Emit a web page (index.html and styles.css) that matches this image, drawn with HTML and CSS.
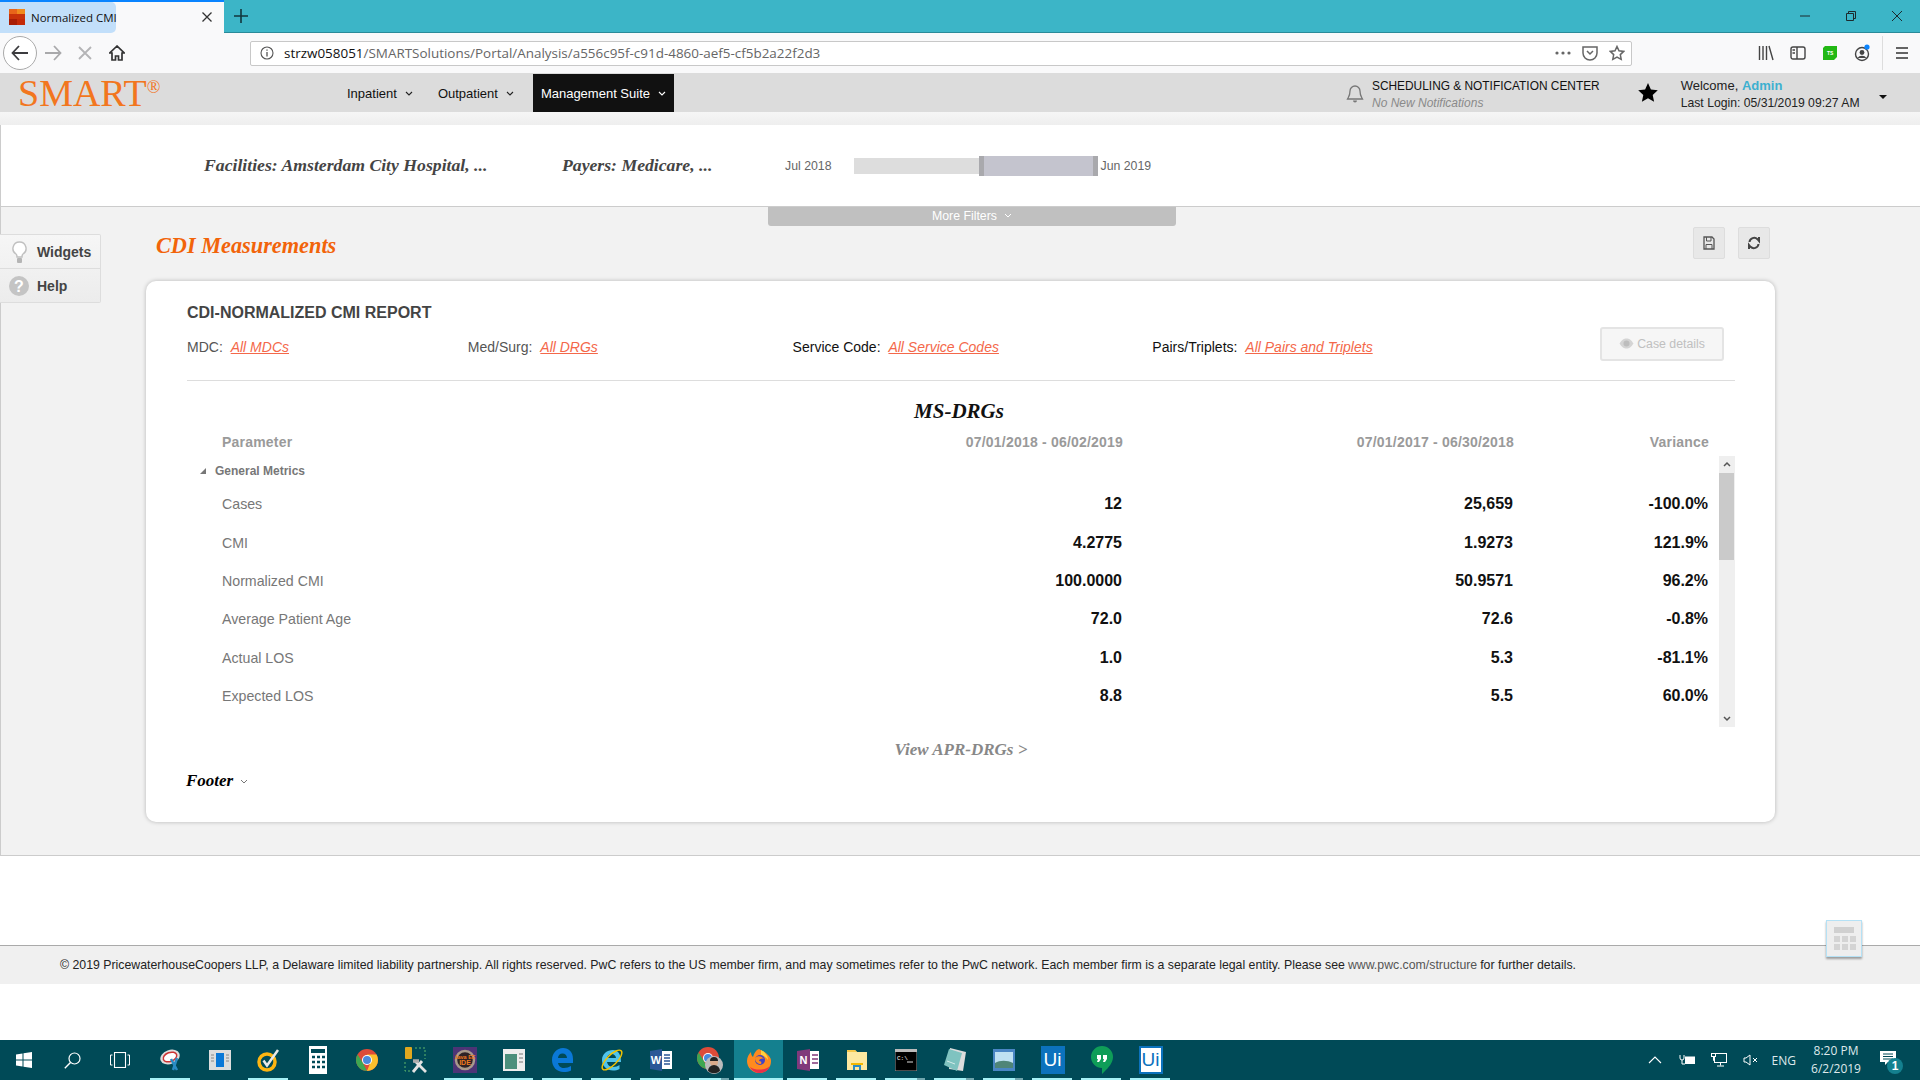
FILE: index.html
```html
<!DOCTYPE html>
<html lang="en">
<head>
    <meta charset="UTF-8">
    <meta name="viewport" content="width=device-width, initial-scale=1.0">
    <title>Normalized CMI</title>
    <link rel="stylesheet" href="styles.css">
</head>
<body>
    <!-- browser chrome -->
    <div class="titlebar">
        <div class="tab">
            <div class="tab-progress"></div>
            <svg class="favicon" width="16" height="16" viewBox="0 0 16 16"><rect width="16" height="16" fill="#c8320a"/><rect x="8" width="8" height="5" fill="#f08a1d"/><rect width="8" height="5" fill="#e8641a"/><rect y="10" width="8" height="6" fill="#a81e06"/><rect x="8" y="10" width="8" height="6" fill="#c42a08"/></svg>
            <span class="tab-title">Normalized CMI</span>
            <svg class="tab-close" width="12" height="12" viewBox="0 0 12 12"><path d="M1.5 1.5l9 9M10.5 1.5l-9 9" stroke="#333" stroke-width="1.3"/></svg>
        </div>
        <svg class="new-tab" width="14" height="14" viewBox="0 0 14 14"><path d="M7 0v14M0 7h14" stroke="#12363d" stroke-width="1.6"/></svg>
        <div class="window-controls">
            <svg width="12" height="12" viewBox="0 0 12 12"><path d="M1 6h10" stroke="#1c2b2e"/></svg>
            <svg width="12" height="12" viewBox="0 0 12 12"><path d="M1.5 3.5h7v7h-7zM3.5 3.5v-2h7v7h-2" fill="none" stroke="#1c2b2e"/></svg>
            <svg width="12" height="12" viewBox="0 0 12 12"><path d="M1 1l10 10M11 1l-10 10" stroke="#1c2b2e"/></svg>
        </div>
    </div>

    <div class="toolbar">
        <div class="nav-btn back"><svg width="18" height="16" viewBox="0 0 18 16"><path d="M8 1L1.5 8 8 15M2 8h15" fill="none" stroke="#3c3c3f" stroke-width="1.8"/></svg></div>
        <div class="nav-btn"><svg width="18" height="16" viewBox="0 0 18 16"><path d="M10 1l6.500 7L10 15M16 8H1" fill="none" stroke="#a9a9ab" stroke-width="1.8"/></svg></div>
        <div class="nav-btn"><svg width="14" height="14" viewBox="0 0 14 14"><path d="M1 1l12 12M13 1L1 13" stroke="#b4b4b6" stroke-width="1.8"/></svg></div>
        <div class="nav-btn"><svg width="16" height="16" viewBox="0 0 16 16"><path d="M8 1L.8 8H3v7h3.500v-4h3v4H13V8h2.200z" fill="none" stroke="#333" stroke-width="1.700"/></svg></div>
        <div class="address">
            <svg class="info-icon" width="14" height="14" viewBox="0 0 14 14"><circle cx="7" cy="7" r="6" fill="none" stroke="#555" stroke-width="1.100"/><path d="M7 6v4.500M7 3.500v1.300" stroke="#555" stroke-width="1.300"/></svg>
            <span class="url"><b>strzw058051</b>/SMARTSolutions/Portal/Analysis/a556c95f-c91d-4860-aef5-cf5b2a22f2d3</span>
            <svg width="16" height="4" viewBox="0 0 16 4"><circle cx="2" cy="2" r="1.600" fill="#666"/><circle cx="8" cy="2" r="1.600" fill="#666"/><circle cx="14" cy="2" r="1.600" fill="#666"/></svg>
            <svg width="16" height="16" viewBox="0 0 16 16"><path d="M1 2h14v6a7 7 0 0 1-14 0z" fill="none" stroke="#666" stroke-width="1.500"/><path d="M5 6l3 3 3-3" fill="none" stroke="#666" stroke-width="1.500"/></svg>
            <svg width="16" height="16" viewBox="0 0 16 16"><path d="M8 1.500l2 4.300 4.700.6-3.400 3.200.9 4.700L8 12l-4.200 2.300.9-4.700L1.300 6.400 6 5.800z" fill="none" stroke="#666" stroke-width="1.500"/></svg>
        </div>
        <div class="browser-tools">
            <svg width="16" height="16" viewBox="0 0 16 16"><path d="M1.500 1v14M5 1v14M8.500 1v14M11 1l4 14" stroke="#444" stroke-width="1.400" fill="none"/></svg>
            <svg width="16" height="16" viewBox="0 0 16 16"><rect x="1" y="2" width="14" height="12" rx="2" fill="none" stroke="#444" stroke-width="1.400"/><path d="M7 2v12M2.500 5H5M2.500 8H5" stroke="#444" stroke-width="1.400"/></svg>
            <svg width="16" height="16" viewBox="0 0 16 16"><path d="M3 1h12v11l-3 3H1V3z" fill="#22b814"/><text x="5" y="10" class="ext-label">TS</text></svg>
            <svg width="16" height="18" viewBox="0 0 16 18"><circle cx="8" cy="10" r="6.500" fill="none" stroke="#444" stroke-width="1.400"/><circle cx="8" cy="8.500" r="2.400" fill="#444"/><path d="M3.500 14a5 4 0 0 1 9 0" fill="#444"/><circle cx="13" cy="3" r="2.600" fill="#0a84ff"/></svg>
            <div class="tools-divider"></div>
            <svg width="14" height="14" viewBox="0 0 14 14"><path d="M1 2h12M1 7h12M1 12h12" stroke="#333" stroke-width="1.600"/></svg>
        </div>
    </div>

    <!-- app header -->
    <div class="appnav">
        <div class="logo">SMART<sup>®</sup></div>
        <div class="menu">
            <div class="menu-item">Inpatient <svg class="chev" width="8" height="5" viewBox="0 0 8 5"><path d="M1 1l3 3 3-3" fill="none" stroke="#222" stroke-width="1.100"/></svg></div>
            <div class="menu-item">Outpatient <svg class="chev" width="8" height="5" viewBox="0 0 8 5"><path d="M1 1l3 3 3-3" fill="none" stroke="#222" stroke-width="1.100"/></svg></div>
            <div class="menu-item active">Management Suite <svg class="chev" width="8" height="5" viewBox="0 0 8 5"><path d="M1 1l3 3 3-3" fill="none" stroke="#fff" stroke-width="1.100"/></svg></div>
        </div>
        <div class="notify">
            <svg width="18" height="20" viewBox="0 0 18 20"><path d="M9 2a5 5 0 0 0-5 5c0 5-1.500 6-2.500 8h15c-1-2-2.500-3-2.500-8a5 5 0 0 0-5-5z" fill="none" stroke="#777" stroke-width="1.300"/><path d="M7 16.500a2 2 0 0 0 4 0z" fill="#777"/></svg>
            <div>
                <div class="notify-title">SCHEDULING &amp; NOTIFICATION CENTER</div>
                <div class="notify-sub">No New Notifications</div>
            </div>
        </div>
        <svg class="fav-star" width="20" height="19" viewBox="0 0 20 19"><path d="M10 0l2.900 6.400 6.900.8-5.100 4.700 1.400 6.900L10 15.300l-6.100 3.500 1.400-6.900L.2 7.200l6.900-.8z" fill="#000"/></svg>
        <div class="welcome">
            <div class="welcome-name">Welcome, <b>Admin</b></div>
            <div>Last Login: 05/31/2019 09:27 AM</div>
        </div>
        <div class="caret"></div>
    </div>
    <div class="strip"></div>

    <!-- filters -->
    <div class="filters">
        <span class="filter-text facilities">Facilities: Amsterdam City Hospital, ...</span>
        <span class="filter-text payers">Payers: Medicare, ...</span>
        <span class="date-label from">Jul 2018</span>
        <div class="slider"><div class="slider-range"></div></div>
        <span class="date-label to">Jun 2019</span>
    </div>

    <div class="main">
        <div class="side-tabs">
            <div class="side-tab">
                <svg width="15" height="23" viewBox="0 0 15 23"><path d="M7.500 1a6.500 6.500 0 0 0-3.500 12c.8.600 1 1.500 1 3h5c0-1.500.2-2.400 1-3a6.500 6.500 0 0 0-3.500-12z" fill="#fff" stroke="#c0c0c0" stroke-width="1.400"/><rect x="5" y="17" width="5" height="5" rx="1" fill="#b5b5b5"/></svg>
                Widgets
            </div>
            <div class="side-tab">
                <svg width="20" height="20" viewBox="0 0 20 20"><circle cx="10" cy="10" r="10" fill="#c4c4c4"/><text x="10" y="15.500" class="help-mark">?</text></svg>
                Help
            </div>
        </div>

        <div class="content">
            <div class="more-filters">More Filters <svg width="8" height="5" viewBox="0 0 8 5"><path d="M1 1l3 3 3-3" fill="none" stroke="#fff"/></svg></div>
            <div class="page-head">
                <h1>CDI Measurements</h1>
                <div class="page-actions">
                    <div class="icon-btn"><svg width="12" height="14" viewBox="0 0 12 14"><path d="M1 1h8l2 2v10H1z" fill="none" stroke="#555" stroke-width="1.300"/><path d="M3.500 1v4h4.500V1M3 13V8.500h6V13" fill="none" stroke="#555"/></svg></div>
                    <div class="icon-btn"><svg width="12" height="14" viewBox="0 0 12 14"><path d="M1.500 6a4.700 4.700 0 0 1 8-2.800L11 5V1M10.500 8a4.700 4.700 0 0 1-8 2.800L1 9v4" fill="none" stroke="#444" stroke-width="2"/></svg></div>
                </div>
            </div>

            <div class="card">
                <h2>CDI-NORMALIZED CMI REPORT</h2>
                <div class="report-filters">
                    <div class="report-filter mdc">MDC: <a>All MDCs</a></div>
                    <div class="report-filter surg">Med/Surg: <a>All DRGs</a></div>
                    <div class="report-filter code">Service Code: <a>All Service Codes</a></div>
                    <div class="report-filter pairs">Pairs/Triplets: <a>All Pairs and Triplets</a></div>
                    <div class="case-details">
                        <svg width="15" height="11" viewBox="0 0 15 11"><path d="M.5 5.500C3 1.500 5 .5 7.500.5s4.500 1 7 5c-2.500 4-4.500 5-7 5s-4.500-1-7-5z" fill="#d4d4d4"/><circle cx="7.500" cy="5.500" r="3" fill="#bdbdbd"/></svg>
                        Case details
                    </div>
                </div>

                <h3>MS-DRGs</h3>
                <div class="grid-row grid-head">
                    <div class="param">Parameter</div>
                    <div>07/01/2018 - 06/02/2019</div>
                    <div>07/01/2017 - 06/30/2018</div>
                    <div>Variance</div>
                </div>
                <div class="grid-scroll">
                    <div class="grid-body">
                        <div class="group"><span class="group-arrow"></span>General Metrics</div>
                        <div class="grid-row metric"><div class="param">Cases</div><div>12</div><div>25,659</div><div>-100.0%</div></div>
                        <div class="grid-row metric"><div class="param">CMI</div><div>4.2775</div><div>1.9273</div><div>121.9%</div></div>
                        <div class="grid-row metric"><div class="param">Normalized CMI</div><div>100.0000</div><div>50.9571</div><div>96.2%</div></div>
                        <div class="grid-row metric"><div class="param">Average Patient Age</div><div>72.0</div><div>72.6</div><div>-0.8%</div></div>
                        <div class="grid-row metric"><div class="param">Actual LOS</div><div>1.0</div><div>5.3</div><div>-81.1%</div></div>
                        <div class="grid-row metric"><div class="param">Expected LOS</div><div>8.8</div><div>5.5</div><div>60.0%</div></div>
                    </div>
                    <div class="scrollbar">
                        <svg width="16" height="17" viewBox="0 0 16 17"><path d="M5 10l3-3 3 3" fill="none" stroke="#555" stroke-width="1.500"/></svg>
                        <div class="scroll-thumb"></div>
                        <svg class="scroll-down" width="16" height="17" viewBox="0 0 16 17"><path d="M5 7l3 3 3-3" fill="none" stroke="#555" stroke-width="1.500"/></svg>
                    </div>
                </div>
                <div class="view-apr">View APR-DRGs &gt;</div>
                <div class="card-footer">Footer <svg width="8" height="5" viewBox="0 0 8 5"><path d="M1 1l3 3 3-3" fill="none" stroke="#777"/></svg></div>
            </div>
        </div>
    </div>

    <div class="blank-a"></div>
    <div class="legal">
        © 2019 PricewaterhouseCoopers LLP, a Delaware limited liability partnership. All rights reserved. PwC refers to the US member firm, and may sometimes refer to the PwC network. Each member firm is a separate legal entity. Please see <a>www.pwc.com/structure</a> for further details.
        <div class="float-widget">
            <div class="float-bar"></div>
            <div class="float-cells"><i></i><i></i><i></i><i></i><i></i><i></i></div>
        </div>
    </div>
    <div class="blank-b"></div>

    <!-- windows taskbar -->
    <div class="taskbar">
        <div class="tb-system">
            <div class="tb-sys"><svg width="16" height="16" viewBox="0 0 16 16"><path d="M0 2.500l6.500-1v6H0zM7.500 1.300L16 0v7.500H7.500zM0 8.500h6.500v6l-6.500-1zM7.500 8.500H16V16l-8.500-1.300z" fill="#fff"/></svg></div>
            <div class="tb-sys"><svg width="17" height="17" viewBox="0 0 17 17"><circle cx="10.500" cy="6.500" r="5.500" fill="none" stroke="#fff" stroke-width="1.200"/><path d="M6.500 10.500L.8 16.200" stroke="#fff" stroke-width="1.400"/></svg></div>
            <div class="tb-sys"><svg width="20" height="16" viewBox="0 0 20 16"><rect x="4.500" y=".5" width="11" height="15" fill="none" stroke="#fff" stroke-width="1.100"/><path d="M2.500 3H.5v10h2M17.500 3h2v10h-2" fill="none" stroke="#fff"/></svg></div>
        </div>
        <div class="tb-apps">
            <div class="tb-app on"><svg width="24" height="24" viewBox="0 0 24 24"><ellipse cx="11" cy="9" rx="10" ry="7" transform="rotate(-20 11 9)" fill="#ddd"/><ellipse cx="11" cy="9" rx="7" ry="4.500" transform="rotate(-20 11 9)" fill="#fff" stroke="#c33" stroke-width="1.500"/><path d="M12 11l6 11M18 10l-4 12" stroke="#2a8bc4" stroke-width="2.500"/></svg></div>
            <div class="tb-app"><svg width="22" height="20" viewBox="0 0 22 20"><rect width="22" height="20" fill="#ddd"/><rect x="7" y="3" width="8" height="14" fill="#0a78d7"/><path d="M2 5h3M2 8h3M2 11h3M17 5h3M17 8h3M17 11h3" stroke="#888"/></svg></div>
            <div class="tb-app on"><svg width="24" height="24" viewBox="0 0 24 24"><circle cx="10" cy="14" r="8" fill="none" stroke="#fdb511" stroke-width="3.500"/><path d="M6.500 12.500l3.500 5L21 2" fill="none" stroke="#e8e8e8" stroke-width="2.500"/></svg></div>
            <div class="tb-app"><svg width="18" height="28" viewBox="0 0 18 28"><rect width="18" height="28" fill="#fff"/><rect x="2" y="3" width="14" height="4" fill="#004a57"/><path d="M3 11h3M8 11h3M13 11h3M3 16h3M8 16h3M13 16h3M3 21h3M8 21h3M13 21h3" stroke="#004a57" stroke-width="2.500"/></svg></div>
            <div class="tb-app"><svg width="22" height="22" viewBox="0 0 22 22"><circle cx="11" cy="11" r="11" fill="#dd4b39"/><path d="M11 22a11 11 0 0 1-9.500-16.500L7 14z" fill="#3da751"/><path d="M11 22a11 11 0 0 0 9.500-16.500H11l3 9z" fill="#fbc02d"/><circle cx="11" cy="11" r="5" fill="#fff"/><circle cx="11" cy="11" r="4" fill="#4a89dc"/></svg></div>
            <div class="tb-app"><svg width="24" height="28" viewBox="0 0 24 28"><rect x="1" y="1" width="7" height="12" rx="1" fill="#e0a81e"/><path d="M11 2h10v11M1 16v9h5" fill="none" stroke="#5cb56c" stroke-dasharray="2 2"/><path d="M9 26l9-11M22 26L11 15" stroke="#e2e2e2" stroke-width="2.800"/><path d="M9 15h6" stroke="#aaa" stroke-width="3.500"/></svg></div>
            <div class="tb-app on"><svg width="24" height="26" viewBox="0 0 24 26"><rect width="24" height="26" fill="#4d3476"/><circle cx="12" cy="13" r="9" fill="#2d2226" stroke="#a89a8c" stroke-width="2.500"/><text x="12" y="11.500" class="ide-label">Java EE</text><text x="12" y="18" class="ide-label big">IDE</text></svg></div>
            <div class="tb-app on"><svg width="22" height="22" viewBox="0 0 22 22"><rect width="22" height="22" fill="#eee"/><rect x="2" y="5" width="12" height="15" fill="#4b8f7c"/><path d="M16 5h4M16 9h4M16 13h4" stroke="#777"/></svg></div>
            <div class="tb-app on"><svg width="21" height="24" viewBox="0 0 21 24"><path d="M21 15h-15c.5 3 3 5 6 5 2.500 0 5-1 7-2v4.500c-2 1-4.500 1.500-7.500 1.500C5 24 0 19 0 12 0 5 5 0 11 0c6 0 10 4 10 11z" fill="#0a78d7"/><path d="M6 10h9c0-2.500-2-4.500-4.500-4.500S6 7.500 6 10z" fill="#004a57"/></svg></div>
            <div class="tb-app on"><svg width="24" height="26" viewBox="0 0 24 26"><path d="M21 15H7c.5 3 3 5 6 5 2.500 0 5-1 6.500-2v4c-2 1-4 1.500-6.500 1.500-6 0-11-4.500-11-10.500S7 3 13 3c5 0 8 4 8 12z" fill="#4fc4ec"/><path d="M7 11h9c0-2-2-4-4.500-4S7 9 7 11z" fill="#004a57"/><ellipse cx="12" cy="13" rx="13" ry="5" transform="rotate(-45 12 13)" fill="none" stroke="#f5c400" stroke-width="1.400"/></svg></div>
            <div class="tb-app on"><svg width="24" height="24" viewBox="0 0 24 24"><rect x="8" y="3" width="15" height="18" fill="#fff"/><path d="M15 7h6M15 10h6M15 13h6M15 16h6" stroke="#2b5797" stroke-width="1.400"/><path d="M1 3l12-2v22L1 21z" fill="#2b5797"/><text x="7" y="16" class="tile-letter">W</text></svg></div>
            <div class="tb-app on split"><svg width="26" height="30" viewBox="0 0 26 30"><circle cx="11" cy="13" r="11" fill="#dd4b39"/><path d="M11 24A11 11 0 0 1 1.500 7.500L7 16z" fill="#3da751"/><circle cx="11" cy="13" r="5" fill="#fff"/><circle cx="11" cy="13" r="4" fill="#4a89dc"/><circle cx="17" cy="20" r="9" fill="#bbb"/><circle cx="17" cy="17" r="4" fill="#d9a98a"/><path d="M11 26a6 6 0 0 1 12 0 9 9 0 0 1-12 0z" fill="#222"/><path d="M13 16a4 4 0 0 1 8 0z" fill="#222"/></svg></div>
            <div class="tb-app on active"><svg width="24" height="26" viewBox="0 0 24 26"><path d="M12 2C20 6 24 10 24 14c0 7-5 12-12 12C5 26 0 20 0 14c0-4 2-7 4-9 0 3 1 4 2 5 1-4 3-7 6-8z" fill="#ff8a1e"/><path d="M3 20c2 4 6 6 10 6 4 0 8-2 10-7-4 4-14 5-20 1z" fill="#e8304a"/><path d="M14 3c4 2 7 6 7 10-2-3-5-5-7-5z" fill="#ffd23f"/><circle cx="13" cy="13" r="5" fill="#3f45c8"/><path d="M8 11c3-3 7-2 9 1-2-1-5 0-5 2 2 0 3 1 2 3-3 0-6-2-6-6z" fill="#ff8a1e"/></svg></div>
            <div class="tb-app on"><svg width="24" height="24" viewBox="0 0 24 24"><rect x="8" y="3" width="15" height="18" fill="#fff"/><path d="M16 7h6M16 11h6M16 15h6" stroke="#80397b" stroke-width="1.400"/><path d="M1 3l13-2v22L1 21z" fill="#80397b"/><text x="7.500" y="16" class="tile-letter">N</text></svg></div>
            <div class="tb-app on"><svg width="22" height="22" viewBox="0 0 22 22"><path d="M1 1h8l2 2h10v18H1z" fill="#fce8a0"/><path d="M1 1h8l2 2H1z" fill="#f5c84b"/><path d="M7 21v-6h8v6h-2v-3H9v3z" fill="#2a8bc4"/><path d="M5 15h12" stroke="#f2b700" stroke-width="2"/></svg></div>
            <div class="tb-app on split"><svg width="22" height="22" viewBox="0 0 22 22"><rect width="22" height="22" fill="#000" stroke="#999"/><rect width="22" height="3" fill="#bbb"/><text x="2" y="11" class="cmd-text">C:\</text><path d="M12 13h6" stroke="#ddd"/></svg></div>
            <div class="tb-app on split"><svg width="24" height="26" viewBox="0 0 24 26"><path d="M7 1l16 4-3 19-14-2z" fill="#ddd"/><path d="M6 2L1 18l13 6 5-18z" fill="#7fc3c0"/><path d="M4 14l8 3" stroke="#d3ece9"/></svg></div>
            <div class="tb-app on split"><svg width="22" height="22" viewBox="0 0 22 22"><rect width="22" height="22" fill="#4a86c4"/><rect x="2" y="3" width="18" height="16" fill="#bfe1f2"/><path d="M2 14c5-3 12-3 18 0v5H2z" fill="#4f8578"/></svg></div>
            <div class="tb-app on"><div class="ui-tile solid">Ui</div></div>
            <div class="tb-app on"><svg width="22" height="28" viewBox="0 0 22 28"><path d="M11 0a11 11 0 0 1 11 11c0 6-5 11-8 14l-3 3v-6A11 11 0 0 1 11 0z" fill="#0f9d58"/><path d="M6 9h4v4l-2 3H6l1-3H6zM12 9h4v4l-2 3h-2l1-3h-1z" fill="#fff"/></svg></div>
            <div class="tb-app on"><div class="ui-tile outline">Ui</div></div>
        </div>
        <div class="tray">
            <svg width="14" height="8" viewBox="0 0 14 8"><path d="M1 7l6-6 6 6" fill="none" stroke="#fff" stroke-width="1.100"/></svg>
            <svg class="tray-power" width="17" height="12" viewBox="0 0 17 12"><path d="M1 1v3a2 2 0 0 0 4 0V1M3 6v4h3" fill="none" stroke="#fff"/><rect x="6" y="2.500" width="10" height="7.500" fill="#fff"/></svg>
            <svg class="tray-net" width="16" height="14" viewBox="0 0 16 14"><rect x="3.500" y=".5" width="12" height="9" fill="none" stroke="#fff"/><rect x=".5" y=".5" width="4" height="3" fill="#004a57" stroke="#fff"/><path d="M9.500 9.500v3M6 13h7M2.500 3.500v4h1" fill="none" stroke="#fff"/></svg>
            <svg class="tray-sound" width="16" height="12" viewBox="0 0 16 12"><path d="M1 4v4h2l4 3V1L3 4z" fill="none" stroke="#fff"/><path d="M10 4l4 4M14 4l-4 4" stroke="#fff"/></svg>
            <span class="tray-lang">ENG</span>
            <div class="tray-clock">8:20 PM<br>6/2/2019</div>
            <div class="tray-notif">
                <svg width="16" height="15" viewBox="0 0 16 15"><path d="M0 0h16v11H8l-3 3v-3H0z" fill="#fff"/><path d="M3 3h10M3 5.500h10M3 8h10" stroke="#004a57"/></svg>
                <span class="notif-count">1</span>
            </div>
        </div>
    </div>
</body>
</html>
```

FILE: styles.css
```css
* { box-sizing: border-box; }

html, body
{
    margin: 0;
    height: 1080px;
    overflow: hidden;
}
body
{
    display: flex;
    flex-direction: column;
    width: 1920px;
    font-family: "Liberation Sans", Arial, sans-serif;
    font-size: 12px;
    color: #333;
    background-color: #fff;
}
svg { display: block; flex: none; }

/* browser title bar */
.titlebar
{
    display: flex;
    align-items: center;
    height: 33px;
    background-color: #3cb5c7;
    border-bottom: 1px solid #2a8a99;
}
.tab
{
    position: relative;
    display: flex;
    align-items: center;
    width: 224px;
    height: 33px;
    padding-left: 9px;
    background-color: #f9f9fa;
    border-top: 2px solid #0a84ff;
}
.tab-progress
{
    position: absolute;
    left: 0;
    top: 0;
    width: 116px;
    height: 31px;
    background-color: #c2dffa;
    border-radius: 0 5px 5px 0;
}
.favicon, .tab-title, .tab-close { position: relative; }
.tab-title
{
    width: 88px;
    margin-left: 6px;
    white-space: nowrap;
    font-family: "Open Sans", sans-serif;
    font-size: 11.5px;
    color: #111;
}
.tab-close { margin-left: 82px; }
.new-tab { margin-left: 10px; }
.window-controls
{
    display: flex;
    gap: 34px;
    margin-left: auto;
    margin-right: 17px;
}

/* browser toolbar */
.toolbar
{
    display: flex;
    align-items: center;
    height: 40px;
    padding-left: 3px;
    background-color: #f9f9fa;
}
.nav-btn
{
    display: flex;
    justify-content: center;
    align-items: center;
    width: 32px;
    height: 34px;
}
.nav-btn.back
{
    width: 34px;
    border: 1px solid #aaa;
    border-radius: 50%;
    background-color: #fff;
}
.address
{
    display: flex;
    align-items: center;
    gap: 11px;
    width: 1382px;
    height: 25px;
    margin-left: 117px;
    padding: 0 6px 0 9px;
    background-color: #fff;
    border: 1px solid #c8c8c8;
    border-radius: 2px;
}
.info-icon { margin-right: -1px; }
.url
{
    flex: 1;
    overflow: hidden;
    white-space: nowrap;
    font-family: "Open Sans", sans-serif;
    font-size: 13.450px;
    color: #666;
}
.url b { font-weight: normal; color: #111; }
.browser-tools
{
    display: flex;
    align-items: center;
    gap: 16px;
    margin-left: 126px;
}
.ext-label
{
    font-family: "Liberation Sans", sans-serif;
    font-size: 5px;
    font-weight: bold;
    fill: #fff;
}
.tools-divider
{
    width: 1px;
    height: 34px;
    margin: 0 -4px;
    background-color: #ddd;
}

/* app header */
.appnav
{
    display: flex;
    align-items: center;
    height: 39px;
    background-color: #dcdcdc;
    font-family: "Liberation Sans", sans-serif;
}
.logo
{
    width: 338px;
    padding: 1px 0 0 18px;
    font-family: "Liberation Serif", serif;
    font-size: 38px;
    line-height: 38px;
    color: #f2761e;
}
.logo sup
{
    font-size: 18px;
    line-height: 0;
    vertical-align: 13px;
}
.menu { display: flex; height: 39px; padding-top: 1px; }
.menu-item
{
    display: flex;
    align-items: center;
    gap: 8px;
    padding: 0 9px;
    font-size: 13px;
    color: #111;
}
.menu-item + .menu-item { margin-left: 7px; }
.menu-item.active
{
    margin-left: 10px;
    padding: 0 8px;
    background-color: #111;
    color: #fff;
}
.notify
{
    display: flex;
    align-items: center;
    gap: 8px;
    margin-top: 3px;
    margin-left: 672px;
}
.notify-title { font-size: 11.900px; color: #111; }
.notify-sub
{
    margin-top: 3px;
    font-size: 12px;
    font-style: italic;
    color: #8a8a8a;
}
.fav-star { margin-left: 38px; }
.welcome
{
    margin-top: 2px;
    margin-left: 23px;
    font-size: 12.2px;
    color: #222;
}
.welcome-name { margin-bottom: 3px; font-size: 13px; }
.welcome b { color: #3cb0d0; }
.caret
{
    width: 0;
    height: 0;
    margin: 9px 0 0 19px;
    border-left: 4px solid transparent;
    border-right: 4px solid transparent;
    border-top: 4px solid #111;
}
.strip
{
    height: 13px;
    background-image: linear-gradient(#f6f6f6, #eee);
}

/* filter bar */
.filters
{
    display: flex;
    align-items: center;
    height: 82px;
    background-color: #fff;
    border-left: 1px solid #ccc;
    border-bottom: 1px solid #ccc;
}
.filter-text
{
    font-family: "Liberation Serif", Georgia, serif;
    font-size: 17.700px;
    font-weight: bold;
    font-style: italic;
    color: #444;
    white-space: nowrap;
}
.facilities { width: 358px; margin-left: 203px; }
.payers { width: 223px; }
.date-label { font-size: 12.3px; color: #666; }
.from { margin-left: 0; margin-right: 22px; }
.to { margin-left: 3px; }
.slider
{
    position: relative;
    width: 244px;
    height: 16px;
    background-color: #ddd;
}
.slider-range
{
    position: absolute;
    left: 125px;
    top: -2px;
    width: 119px;
    height: 20px;
    background-color: #c4c4ce;
    border-left: 5px solid #a9a9ad;
    border-right: 5px solid #a9a9ad;
}

/* main area */
.main
{
    display: grid;
    grid-template-columns: 145px 1629px;
    height: 649px;
    background-color: #f2f2f2;
    border-left: 1px solid #ccc;
    border-bottom: 1px solid #ccc;
}
.side-tabs
{
    align-self: start;
    width: 101px;
    margin: 27px 0 0 -1px;
    background-image: linear-gradient(#f6f6f6, #ececec);
    border: 1px solid #ddd;
    border-left: none;
    border-radius: 0 2px 2px 0;
}
.side-tab
{
    display: flex;
    align-items: center;
    gap: 8px;
    height: 33px;
    padding-left: 9px;
    font-size: 14px;
    font-weight: bold;
    color: #444;
}
.side-tab:first-child { height: 34px; padding-left: 12px; gap: 10px; padding-top: 1px; border-bottom: 1px solid #ddd; }
.help-mark
{
    font-family: "Liberation Sans", sans-serif;
    font-size: 16px;
    font-weight: bold;
    text-anchor: middle;
    fill: #fff;
}
.more-filters
{
    display: flex;
    justify-content: center;
    align-items: center;
    gap: 7px;
    width: 408px;
    height: 19px;
    margin-left: 622px;
    padding-bottom: 2px;
    background-color: #c0c0c0;
    border-radius: 0 0 3px 3px;
    color: #fff;
    font-size: 12.3px;
}
.page-head
{
    display: flex;
    justify-content: space-between;
    height: 55px;
    padding: 1px 5px 0 10px;
}
h1
{
    margin: 6px 0 0;
    font-family: "Liberation Serif", serif;
    font-size: 22.300px;
    font-weight: bold;
    font-style: italic;
    color: #f2640a;
}
.page-actions { display: flex; gap: 13px; }
.icon-btn
{
    display: flex;
    justify-content: center;
    align-items: center;
    width: 32px;
    height: 32px;
    background-color: #e8e8e8;
    border: 1px solid #ddd;
    border-radius: 2px;
}

/* report card */
.card
{
    height: 541px;
    padding: 22px 40px 0 41px;
    background-color: #fff;
    border-radius: 10px;
    box-shadow: 0 0 4px rgba(0, 0, 0, 0.25);
}
h2
{
    margin: 0;
    font-size: 16px;
    font-weight: bold;
    line-height: 20px;
    color: #444;
}
.report-filters
{
    display: flex;
    align-items: center;
    height: 58px;
    padding-bottom: 9px;
    border-bottom: 1px solid #ddd;
    font-size: 14px;
    color: #555;
}
.report-filter { white-space: nowrap; }
.report-filter a
{
    margin-left: 4px;
    font-style: italic;
    text-decoration: underline;
    color: #f4684a;
}
.mdc { width: 281px; }
.surg { width: 325px; }
.code { width: 360px; color: #111; }
.pairs { width: 448px; color: #111; }
.case-details
{
    display: flex;
    align-items: center;
    justify-content: center;
    gap: 3px;
    width: 124px;
    height: 34px;
    margin-right: 11px;
    margin-left: auto;
    margin-bottom: 7px;
    background-color: #f6f6f6;
    border: 2px solid #e4e4e4;
    border-radius: 3px;
    font-size: 12.3px;
    color: #c0c0c0;
}
h3
{
    margin: 18px 0 0;
    padding-right: 4px;
    font-family: "Liberation Serif", serif;
    font-size: 21px;
    font-weight: bold;
    font-style: italic;
    line-height: 24px;
    text-align: center;
    color: #111;
}
.grid-row
{
    display: grid;
    grid-template-columns: 400px 535px 391px 195px;
    align-items: center;
    text-align: right;
}
.param { padding-left: 35px; text-align: left; }
.grid-head
{
    height: 20px;
    margin-top: 9px;
    font-size: 14px;
    font-weight: bold;
    letter-spacing: 0.2px;
    color: #9a9a9a;
}
.grid-head > div { margin-right: -1px; }
.grid-scroll
{
    display: flex;
    justify-content: space-between;
    height: 271px;
    margin-top: 4px;
}
.grid-body { width: 1521px; }
.group
{
    display: flex;
    align-items: center;
    height: 29px;
    padding-left: 13px;
    font-size: 12px;
    font-weight: bold;
    color: #777;
}
.group-arrow
{
    width: 0;
    height: 0;
    margin-right: 9px;
    border-left: 6px solid transparent;
    border-bottom: 6px solid #777;
}
.metric
{
    height: 38.400px;
    font-size: 16px;
    font-weight: bold;
    color: #111;
}
.metric .param { font-size: 14.2px; font-weight: normal; color: #777; }
.scrollbar
{
    display: flex;
    flex-direction: column;
    width: 16px;
    background-color: #efefef;
}
.scroll-thumb
{
    width: 15px;
    height: 87px;
    background-color: #cacaca;
}
.scroll-down { margin-top: auto; }
.view-apr
{
    margin-top: 13px;
    font-family: "Liberation Serif", serif;
    font-size: 17px;
    font-weight: bold;
    font-style: italic;
    text-align: center;
    color: #888;
}
.card-footer
{
    display: flex;
    align-items: center;
    gap: 7px;
    margin: 11px 0 0 -1px;
    font-family: "Liberation Serif", serif;
    font-size: 17px;
    font-weight: bold;
    font-style: italic;
    color: #000;
}

/* page footer */
.blank-a { height: 89px; background-color: #fff; }
.legal
{
    position: relative;
    display: flex;
    align-items: center;
    height: 39px;
    padding-left: 60px;
    background-color: #f0f0f0;
    border-top: 1px solid #aaa;
    font-size: 12.32px;
    color: #222;
}
.legal a { margin: 0 3px; color: #555; }
.float-widget
{
    position: absolute;
    left: 1826px;
    top: -26px;
    width: 36px;
    height: 37px;
    padding: 6px 7px;
    background-color: #eee;
    border: 1px solid #b5e1f5;
    box-shadow: 0 2px 2px rgba(0, 0, 0, 0.35);
}
.float-bar { height: 6px; margin-bottom: 3px; background-color: #d0d0d0; }
.float-cells
{
    display: grid;
    grid-template-columns: repeat(3, 6px);
    gap: 2px;
}
.float-cells i { height: 6px; background-color: #d4d4d4; }
.blank-b { flex: 1; background-color: #fff; }

/* taskbar */
.taskbar
{
    display: flex;
    height: 40px;
    background-color: #004a57;
}
.tb-system { display: flex; }
.tb-sys
{
    display: flex;
    justify-content: center;
    align-items: center;
    width: 48px;
    height: 40px;
}
.tb-apps { display: flex; margin-left: 2px; }
.tb-app
{
    position: relative;
    display: flex;
    justify-content: center;
    align-items: center;
    width: 49px;
    height: 40px;
    font-size: 0;
}
.tb-app.on::after
{
    content: "";
    position: absolute;
    left: 4px;
    right: 5px;
    bottom: 0;
    height: 2px;
    background-color: #a6f1f6;
}
.tb-app.split::before
{
    content: "";
    position: absolute;
    right: 5px;
    bottom: 0;
    width: 8px;
    height: 2px;
    background-color: #6fa6ae;
    z-index: 1;
}
.tb-app.active { background-color: #14808f; }
.tb-app.active::after { left: 0; right: 0; }
.tile-letter
{
    font-family: "Liberation Sans", sans-serif;
    font-size: 11px;
    font-weight: bold;
    text-anchor: middle;
    fill: #fff;
}
.ide-label
{
    font-family: "Liberation Sans", sans-serif;
    font-size: 5.500px;
    font-weight: bold;
    text-anchor: middle;
    fill: #ee7a1e;
}
.ide-label.big { font-size: 7px; }
.cmd-text
{
    font-family: "Liberation Mono", monospace;
    font-size: 6px;
    fill: #fff;
}
.ui-tile
{
    display: flex;
    justify-content: center;
    align-items: center;
    width: 24px;
    height: 28px;
    font-family: "Liberation Sans", sans-serif;
    font-size: 19px;
}
.ui-tile.solid { background-color: #0c72bd; color: #fff; }
.ui-tile.outline { background-color: #fff; border: 2px solid #0c72bd; color: #0c72bd; background-clip: padding-box; }
.tray
{
    display: flex;
    align-items: center;
    margin-left: auto;
    padding-right: 5px;
    color: #fff;
}
.tray-power { margin-left: 17px; }
.tray-net { margin-left: 15px; }
.tray-sound { margin-left: 16px; }
.tray-lang { margin-left: 13px; font-family: "Open Sans", sans-serif; font-size: 12px; color: #dfe9eb; }
.tray-clock
{
    width: 60px;
    margin-left: 10px;
    font-family: "Open Sans", sans-serif;
    font-size: 12px;
    line-height: 18px;
    text-align: center;
    color: #dfe9eb;
}
.tray-notif { position: relative; margin-left: 14px; margin-right: 19px; margin-top: -4px; }
.notif-count
{
    position: absolute;
    left: 7px;
    top: 7px;
    width: 16px;
    height: 16px;
    border-radius: 50%;
    background-color: #14808f;
    font-size: 12px;
    font-weight: bold;
    line-height: 16px;
    text-align: center;
    color: #fff;
}
```
